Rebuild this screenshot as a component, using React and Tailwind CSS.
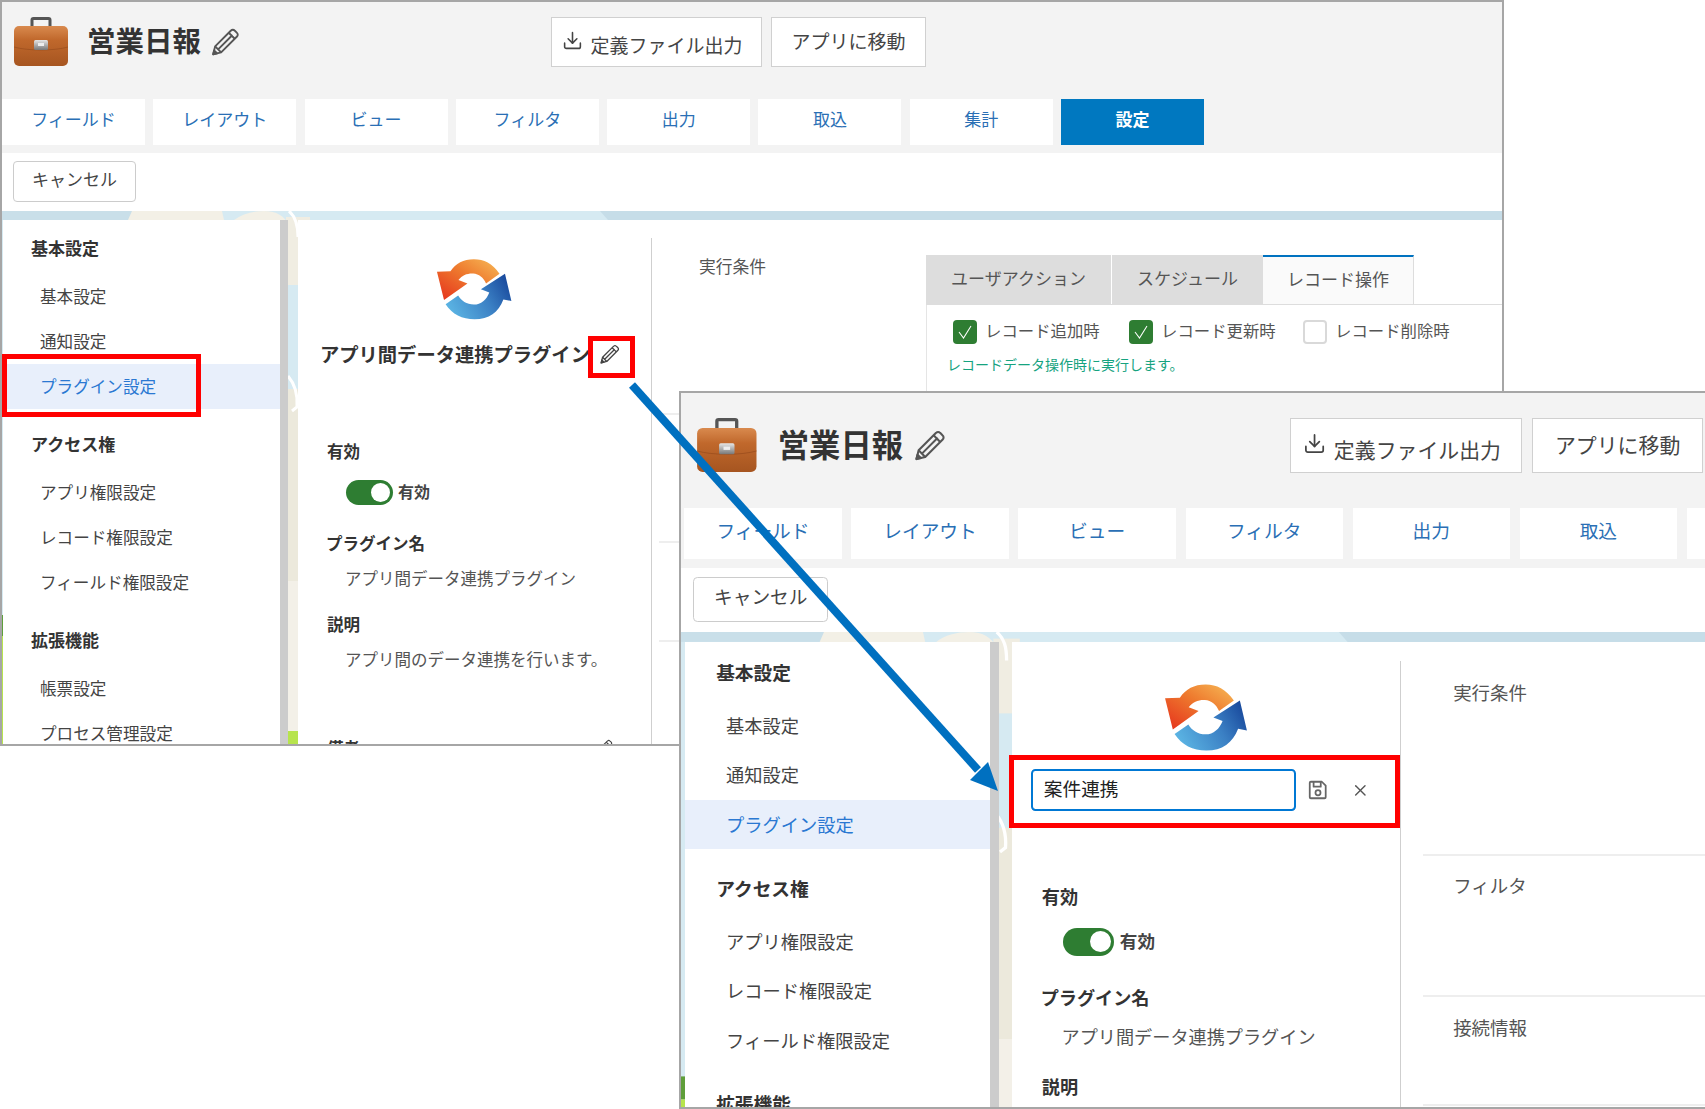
import React from "react";
import { Download, X } from "lucide-react";

const tabs = ["フィールド", "レイアウト", "ビュー", "フィルタ", "出力", "取込", "集計", "設定"];

const menu = [
  { title: "基本設定", mt: "mt-[6px]", items: ["基本設定", "通知設定", "プラグイン設定"] },
  { title: "アクセス権", mt: "mt-[13px]", items: ["アプリ権限設定", "レコード権限設定", "フィールド権限設定"] },
  { title: "拡張機能", mt: "mt-[13px]", items: ["帳票設定", "プロセス管理設定"] },
];

const Briefcase = () => (
  <svg viewBox="0 0 56 50" className="w-[56px] h-[50px] shrink-0">
    <defs>
      <linearGradient id="case" x1="0" y1="0" x2="0" y2="1">
        <stop offset="0" stopColor="#d98a4e" />
        <stop offset="0.35" stopColor="#c0682c" />
        <stop offset="1" stopColor="#a65520" />
      </linearGradient>
      <linearGradient id="clasp" x1="0" y1="0" x2="0" y2="1">
        <stop offset="0" stopColor="#e6e6e6" />
        <stop offset="1" stopColor="#777" />
      </linearGradient>
    </defs>
    <path d="M19 10V3a1.5 1.5 0 0 1 1.5-1.5h15A1.5 1.5 0 0 1 37 3v7" fill="none" stroke="#555" strokeWidth="3" />
    <rect x="1" y="9" width="54" height="40" rx="5" fill="url(#case)" />
    <path d="M1 30c14 4 40 4 54 0" fill="none" stroke="#9a4d1c" strokeWidth="0.7" />
    <rect x="21" y="23" width="14" height="10" rx="1.5" fill="url(#clasp)" />
    <rect x="25" y="26" width="6" height="3" fill="#eeeeee" />
  </svg>
);

const SyncLogo = () => (
  <svg viewBox="30 22 240 194" className="w-[77px] h-[65px]">
    <defs>
      <linearGradient id="syncTop" x1="0" y1="1" x2="1" y2="0">
        <stop offset="0" stopColor="#e5301c" />
        <stop offset="0.55" stopColor="#ee7a2e" />
        <stop offset="1" stopColor="#f7bb58" />
      </linearGradient>
      <linearGradient id="syncBottom" x1="0" y1="0.6" x2="1" y2="0.2">
        <stop offset="0" stopColor="#5ab2e2" />
        <stop offset="0.55" stopColor="#3b80c4" />
        <stop offset="1" stopColor="#17479b" />
      </linearGradient>
    </defs>
    <path d="M228 70C205 38 180 25 148 25C115 25 92 38 75 62L33 64L55 152L128 100L100 89C112 74 128 68 146 69C164 70 178 82 186 100Z" fill="url(#syncTop)" />
    <path d="M60 165C80 196 112 212 150 212C195 212 225 190 240 150L265 155L245 70L170 118L196 128C188 150 170 166 148 166C126 166 108 154 99 138Z" fill="url(#syncBottom)" />
  </svg>
);

const Pencil = ({ className, color = "#555" }) => (
  <svg viewBox="0 0 24 24" fill="none" stroke={color} strokeWidth="1.5" strokeLinejoin="round" className={className}>
    <path d="M2.5 21.5l1.6-6.4L16.8 2.4a2 2 0 0 1 2.9 0l1.9 1.9a2 2 0 0 1 0 2.9L8.9 19.9z" />
    <path d="M4.1 15.1l4.8 4.8M15 4.2l4.8 4.8M6.5 17.5L18 6" />
    <path d="M2.5 21.5l.8-3.2 2.4 2.4z" fill={color} />
  </svg>
);

const SaveIcon = () => (
  <svg viewBox="0 0 20 20" fill="none" stroke="#666" strokeWidth="1.6" strokeLinejoin="round" className="w-[20px] h-[20px] ml-[10px] shrink-0">
    <path d="M3.5 2.5h10l3.5 3.5v10.5a1 1 0 0 1-1 1H3.5a1 1 0 0 1-1-1v-13a1 1 0 0 1 1-1z" />
    <path d="M6 2.5v4.5h6.5V2.5" />
    <circle cx="10" cy="12.5" r="2.3" />
  </svg>
);

// the map photo that shows through around the panels
const MapBackground = () => (
  <svg className="absolute left-0 top-0 w-[1600px] h-[534px]">
    <rect width="1600" height="534" fill="#d6eaf2" />
    <rect width="134" height="9" fill="#c9dfe9" />
    <path d="M126 9L130 0H220L222 9Z" fill="#f3f0e6" />
    <path d="M232 9C240 3 250 0 262 0C275 0 282 5 287 14V9Z" fill="#f3f0e6" />
    <path d="M598 0H1600V9H606Z" fill="#c6dde8" />
    <rect x="284" y="6" width="24" height="68" fill="#f0ede2" />
    <rect x="284" y="178" width="24" height="356" fill="#ece9dc" />
    <rect x="284" y="370" width="24" height="164" fill="#f3f0e8" />
    <path d="M287 0C294 6 296 14 296 26" fill="none" stroke="#fff" strokeWidth="3" />
    <path d="M286 165C292 172 296 182 295 196L290 200" fill="none" stroke="#fff" strokeWidth="3" />
    <rect x="284" y="520" width="24" height="14" fill="#b7e44d" />
    <rect y="404" width="8" height="21" fill="#5f9e3a" />
    <rect y="425" width="8" height="109" fill="#b7e44d" />
  </svg>
);

const Sidebar = () => (
  <div className="relative w-[277px] shrink-0 bg-white overflow-hidden">
    {menu.map((group) => (
      <div key={group.title} className={group.mt}>
        <div className="h-[44px] mb-1 pl-[28px] flex items-center text-[17px] font-bold text-[#333]">{group.title}</div>
        {group.items.map((item) => {
          const active = item === "プラグイン設定";
          return (
            <div
              key={item}
              className={`h-[45px] pl-[37px] flex items-center text-[16.6px] ${active ? "bg-[#e8effb] text-[#2a78d2]" : "text-[#444]"}`}
            >
              {item}
            </div>
          );
        })}
      </div>
    ))}
  </div>
);

const Check = ({ on, className, label }) => (
  <div className={`flex items-center h-6 ${className}`}>
    {on ? (
      <span className="w-6 h-6 rounded-sm bg-[#2e7d32] flex items-center justify-center">
        <svg viewBox="0 0 24 24" fill="none" stroke="#fff" strokeWidth="1.4" className="w-[18px] h-[18px]">
          <path d="M4 12l6 8L20 4" />
        </svg>
      </span>
    ) : (
      <span className="w-6 h-6 rounded-sm bg-white border-2 border-[#d9d9d9]" />
    )}
    <span className="ml-[8px] mb-[4px] leading-[16px] text-[16.4px] text-[#555]">{label}</span>
  </div>
);

const TriggerTabs = () => (
  <div className="flex-1 mt-[17px]">
    <div className="flex h-[50px] border-b border-[#ddd] text-[17px] text-[#555]">
      <div className="w-[185px] pb-[3px] bg-[#dddddd] flex items-center justify-center">ユーザアクション</div>
      <div className="w-[151px] pb-[3px] ml-px bg-[#dddddd] flex items-center justify-center">スケジュール</div>
      <div className="w-[151px] pb-[3px] bg-[#fafafa] border-t-2 border-r border-t-[#0072c0] border-r-[#ddd] flex items-center justify-center">レコード操作</div>
    </div>
    <div className="h-[108px] border-l border-[#e5e5e5]">
      <div className="flex pt-[15px] pl-[26px]">
        <Check on label="レコード追加時" className="w-[176px]" />
        <Check on label="レコード更新時" className="w-[174px]" />
        <Check label="レコード削除時" />
      </div>
      <div className="mt-[10px] pl-[20px] text-[14px] text-[#16a37f]">レコードデータ操作時に実行します。</div>
    </div>
  </div>
);

const ConfigRows = ({ showTabs, rowInset, labelInset }) => (
  <div className="flex-1">
    <div className="h-[175px] flex pl-[47px]">
      <div className="w-[227px] shrink-0 pt-[16px] h-[41px] leading-[24px] text-[16.8px] text-[#555]">実行条件</div>
      {showTabs && <TriggerTabs />}
    </div>
    <div className={`h-[128px] border-t-2 border-[#eeeeee] ${rowInset}`}>
      <div className={`pt-[15px] leading-[24px] text-[16.8px] text-[#555] ${labelInset}`}>フィルタ</div>
    </div>
    <div className={`h-[99px] border-t-2 border-[#eeeeee] ${rowInset}`}>
      <div className={`pt-[16px] leading-[24px] text-[16.8px] text-[#555] ${labelInset}`}>接続情報</div>
    </div>
    <div className={`border-t-2 border-[#eeeeee] ${rowInset}`} />
  </div>
);

const PluginColumn = ({ editing }) => (
  <div className="w-[354px] shrink-0 border-r border-[#cfcfcf]">
    <div className="mt-[19px] flex justify-center">
      <SyncLogo />
    </div>
    <div className={editing ? "-ml-[2px]" : ""}>
      {editing ? (
        <div className="mt-[13px] h-[40px] pl-[19px] flex items-center">
          <div className="w-[241px] h-[38px] border-2 border-[#0078d4] rounded-sm bg-white pl-[10px] pb-[3px] flex items-center text-[17px] text-[#222]">案件連携</div>
          <SaveIcon />
          <X className="ml-[20px] text-[#555]" size={17} strokeWidth={1.8} />
        </div>
      ) : (
        <div className="mt-[12px] h-[40px] pl-[22px] flex items-center">
          <span className="text-[19.3px] font-bold text-[#333] whitespace-nowrap">アプリ間データ連携プラグイン</span>
          <Pencil className="w-[21px] h-[21px] ml-[9px]" color="#444" />
        </div>
      )}
      <div className="mt-[65px] h-[24px] pl-[29px] flex items-center text-[16.5px] font-bold text-[#333]">有効</div>
      <div className="mt-[16px] h-[26px] pl-[48px] flex items-center">
        <span className="w-[47px] h-[25px] rounded-full bg-[#2e7d32] flex items-center justify-end pr-[3px]">
          <span className="w-[19px] h-[19px] rounded-full bg-white" />
        </span>
        <span className="ml-[5px] pb-[2px] text-[16px] font-bold text-[#444]">有効</span>
      </div>
      <div className="mt-[26px] h-[24px] pl-[28px] flex items-center text-[16.5px] font-bold text-[#333]">プラグイン名</div>
      <div className="mt-[11px] h-[24px] pl-[47px] flex items-center text-[16.5px] text-[#555]">アプリ間データ連携プラグイン</div>
      <div className="mt-[22px] h-[24px] pl-[29px] flex items-center text-[16.5px] font-bold text-[#333]">説明</div>
      <div className="mt-[11px] h-[24px] pl-[47px] flex items-center text-[16.5px] text-[#555]">アプリ間のデータ連携を行います。</div>
      <div className="mt-[65px] h-[24px] pl-[29px] flex items-center text-[16.5px] font-bold text-[#333]">
        備考
        <Pencil className="w-[18px] h-[18px] ml-[235px]" color="#444" />
      </div>
    </div>
  </div>
);

const AppWindow = ({ className, scale, headPad, leftPad, contentPad, titleWidth, gap, tabGap, editing, showTabs, rowInset, labelInset }) => (
  <div className={`absolute overflow-hidden bg-white border-[#a6a6a6] ${className}`}>
    <div className={`flex flex-col h-full ${scale}`}>
      <div className={`bg-[#f3f3f3] shrink-0 ${headPad} ${leftPad}`}>
        <div className="flex h-[50px]">
          <div className={`${titleWidth} shrink-0 pl-[11px] flex items-center`}>
            <Briefcase />
            <span className="ml-[18px] mb-[4px] leading-[40px] text-[28.5px] font-bold text-[#333]">営業日報</span>
            <Pencil className="w-[30px] h-[31px] ml-[9px]" />
          </div>
          <button className="w-[211px] shrink-0 pr-[8px] bg-white border border-[#d0d0d0] flex items-center justify-center text-[19px] text-[#444]">
            <Download size={21} strokeWidth={1.8} className="mb-1" />
            <span className="ml-[7px] pt-[7px]">定義ファイル出力</span>
          </button>
          <button className="w-[155px] shrink-0 ml-[9px] pb-[2px] bg-white border border-[#d0d0d0] text-[19px] text-[#444]">アプリに移動</button>
        </div>
        <div className={`mt-[32px] pb-[8px] flex ${tabGap}`}>
          {tabs.map((tab) => (
            <div
              key={tab}
              className={`w-[143px] h-[46px] shrink-0 pb-[6px] flex items-center justify-center text-[17px] ${tab === "設定" ? "bg-[#0078c0] text-white font-bold" : "bg-white text-[#2a6fb5]"}`}
            >
              {tab}
            </div>
          ))}
        </div>
      </div>
      <div className={`h-[58px] shrink-0 pt-[8px] pl-[11px] ${leftPad}`}>
        <button className="w-[123px] h-[41px] pb-[5px] border border-[#ccc] rounded-sm text-[17px] text-[#444]">キャンセル</button>
      </div>
      <div className={`relative flex-1 flex pt-[9px] min-h-0 overflow-hidden ${contentPad}`}>
        <MapBackground />
        <Sidebar />
        <div className="relative w-[8px] shrink-0 bg-[#cccccc]" />
        <div className={`${gap} shrink-0`} />
        <div className="relative flex-1 flex bg-white pt-[18px]">
          <PluginColumn editing={editing} />
          <ConfigRows showTabs={showTabs} rowInset={rowInset} labelInset={labelInset} />
        </div>
      </div>
    </div>
  </div>
);

export default function App() {
  return (
    <div className="relative w-[1705px] h-[1109px] overflow-hidden bg-white font-['Noto_Sans_CJK_JP','Liberation_Sans',sans-serif]">
      <AppWindow
        className="left-0 top-0 w-[1504px] h-[746px] border-2"
        headPad="pt-[15px]"
        leftPad=""
        contentPad="pl-px"
        titleWidth="w-[549px]"
        gap="w-[10px]"
        tabGap="gap-[8.3px]"
        showTabs
        rowInset="ml-[7px]"
        labelInset="pl-[40px]"
      />
      <AppWindow
        className="left-[679px] top-[391px] w-[1026px] h-[718px] border-2 border-r-0"
        scale="[zoom:1.1]"
        headPad="pt-[23px]"
        leftPad="pl-[3px]"
        contentPad="pl-[4px]"
        titleWidth="w-[551px]"
        gap="w-[12px]"
        tabGap="gap-[8.9px]"
        editing
        rowInset="ml-[20px]"
        labelInset="pl-[27px]"
      />

      <div className="absolute left-[2px] top-[354px] w-[199px] h-[63px] border-[5px] border-[#ff0000]" />
      <div className="absolute left-[588px] top-[336px] w-[47px] h-[42px] border-[5px] border-[#ff0000]" />
      <div className="absolute left-[1009px] top-[755px] w-[391px] h-[73px] border-[5px] border-[#ff0000]" />

      <svg viewBox="0 0 1705 1109" className="absolute inset-0 w-[1705px] h-[1109px] pointer-events-none">
        <line x1="632" y1="385" x2="978" y2="770" stroke="#0070c0" strokeWidth="8" />
        <polygon points="998,791 970,780 988,762" fill="#0070c0" />
      </svg>
    </div>
  );
}
